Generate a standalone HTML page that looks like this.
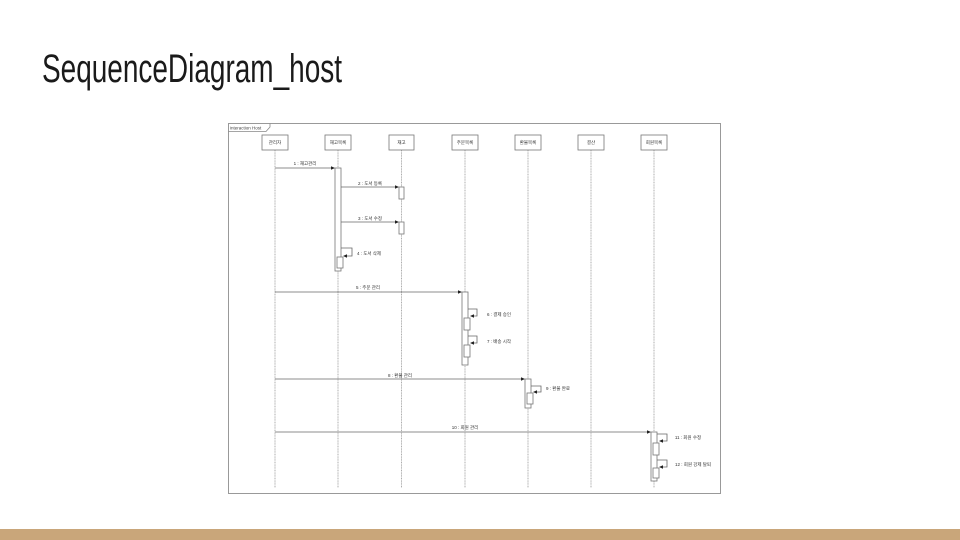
<!DOCTYPE html>
<html><head><meta charset="utf-8"><style>
html,body{margin:0;padding:0;background:#fff;}
body{width:960px;height:540px;overflow:hidden;position:relative;}
</style></head><body>
<svg width="960" height="540" viewBox="0 0 960 540" xmlns="http://www.w3.org/2000/svg" style="position:absolute;left:0;top:0">
<text x="42" y="82" font-family="Liberation Sans, sans-serif" font-size="40" fill="#1a1a1a" textLength="300" lengthAdjust="spacingAndGlyphs">SequenceDiagram_host</text>
<rect x="0" y="529" width="960" height="11" fill="#c9a67a"/>
<rect x="228.5" y="123.5" width="492" height="370" fill="#fff" stroke="#999" stroke-width="1"/>
<path d="M228.5 131.5 H266 L270 127 V123.5" fill="none" stroke="#888" stroke-width="0.8"/>
<text x="230" y="129.5" font-family="Liberation Sans, sans-serif" font-size="4.5" fill="#444">interaction Host</text>
<g font-family="Liberation Sans, Noto Sans CJK KR, sans-serif" font-size="4.5" fill="#333" text-anchor="middle">
<g stroke="#999" stroke-width="0.8" stroke-dasharray="1,0.6">
<line x1="275" y1="150" x2="275" y2="488"/>
<line x1="338" y1="150" x2="338" y2="488"/>
<line x1="401.5" y1="150" x2="401.5" y2="488"/>
<line x1="465" y1="150" x2="465" y2="488"/>
<line x1="528" y1="150" x2="528" y2="488"/>
<line x1="591" y1="150" x2="591" y2="488"/>
<line x1="654" y1="150" x2="654" y2="488"/>
</g>
<g fill="#fff" stroke="#777" stroke-width="0.8">
<rect x="262" y="135" width="26" height="15"/>
<rect x="325" y="135" width="26" height="15"/>
<rect x="389" y="135" width="25" height="15"/>
<rect x="452" y="135" width="26" height="15"/>
<rect x="515" y="135" width="26" height="15"/>
<rect x="578" y="135" width="26" height="15"/>
<rect x="641" y="135" width="26" height="15"/>
</g>
<text x="275" y="144">관리자</text>
<text x="338" y="144">재고목록</text>
<text x="401.5" y="144">재고</text>
<text x="465" y="144">주문목록</text>
<text x="528" y="144">환불목록</text>
<text x="591" y="144">결산</text>
<text x="654" y="144">회원목록</text>
<g fill="#fff" stroke="#777" stroke-width="0.8">
<rect x="335" y="168" width="6" height="103"/>
<rect x="399" y="187" width="5" height="12"/>
<rect x="399" y="222" width="5" height="12"/>
<rect x="337" y="257" width="6" height="11"/>
<rect x="462" y="292" width="6" height="73"/>
<rect x="464" y="318" width="6" height="12"/>
<rect x="464" y="345" width="6" height="12"/>
<rect x="525" y="379" width="6" height="29"/>
<rect x="527" y="393" width="6" height="11"/>
<rect x="651" y="432" width="6" height="49"/>
<rect x="653" y="443" width="6" height="12"/>
<rect x="653" y="468" width="6" height="10"/>
</g>
<g stroke="#666" stroke-width="0.8" fill="none">
<line x1="275" y1="168" x2="334" y2="168"/>
<line x1="341" y1="187" x2="398" y2="187"/>
<line x1="341" y1="222" x2="398" y2="222"/>
<path d="M341 248 H352 V256 H344"/>
<line x1="275" y1="292" x2="461" y2="292"/>
<path d="M468 309 H477 V316 H471"/>
<path d="M468 336 H477 V343 H471"/>
<line x1="275" y1="379" x2="524" y2="379"/>
<path d="M531 386 H541 V392 H534"/>
<line x1="275" y1="432" x2="650" y2="432"/>
<path d="M657 434 H667 V441 H660"/>
<path d="M657 460 H667 V467 H660"/>
</g>
<g fill="#222">
<path d="M335 168 l-4 -1.8 v3.6z"/>
<path d="M399 187 l-4 -1.8 v3.6z"/>
<path d="M399 222 l-4 -1.8 v3.6z"/>
<path d="M343 256 l4 -1.8 v3.6z"/>
<path d="M462 292 l-4 -1.8 v3.6z"/>
<path d="M470 316 l4 -1.8 v3.6z"/>
<path d="M470 343 l4 -1.8 v3.6z"/>
<path d="M525 379 l-4 -1.8 v3.6z"/>
<path d="M533 392 l4 -1.8 v3.6z"/>
<path d="M651 432 l-4 -1.8 v3.6z"/>
<path d="M659 441 l4 -1.8 v3.6z"/>
<path d="M659 467 l4 -1.8 v3.6z"/>
</g>
<text x="305" y="165">1 : 재고관리</text>
<text x="370" y="185">2 : 도서 등록</text>
<text x="370" y="220">3 : 도서 수정</text>
<text x="369" y="255">4 : 도서 삭제</text>
<text x="368" y="289">5 : 주문 관리</text>
<text x="499" y="316">6 : 결제 승인</text>
<text x="499" y="343">7 : 배송 시작</text>
<text x="400" y="377">8 : 환불 관리</text>
<text x="558" y="390">9 : 환불 완료</text>
<text x="465" y="429">10 : 회원 관리</text>
<text x="688" y="439">11 : 회원 수정</text>
<text x="693" y="466">12 : 회원 강제 탈퇴</text>
</g>
</svg>
</body></html>
